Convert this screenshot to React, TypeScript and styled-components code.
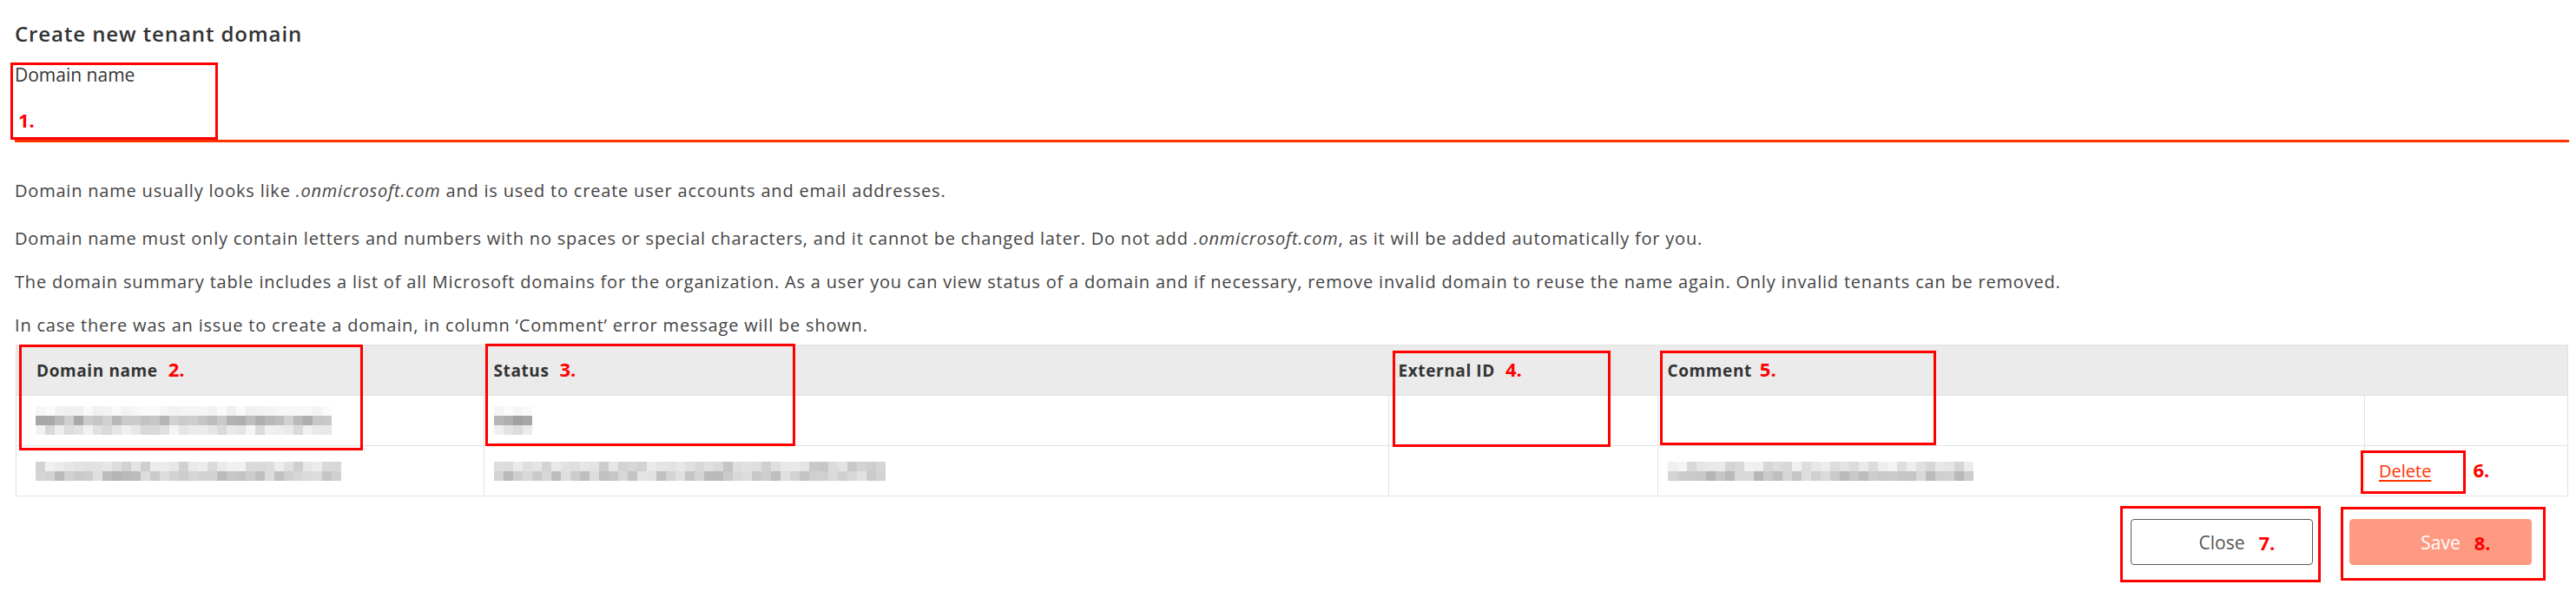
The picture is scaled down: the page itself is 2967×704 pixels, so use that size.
import React from 'react';
import styled, { createGlobalStyle } from 'styled-components';

const MARK = '#ff0000';
const ACCENT = '#ff3300';

const GlobalStyle = createGlobalStyle`
  html, body {
    margin: 0;
    padding: 0;
    background: #fff;
  }
  body {
    font-family: 'Open Sans', 'Liberation Sans', sans-serif;
    color: #444;
  }
`;

type Band = [number, number];

const seeded = (seed: number) => {
  let s = seed;
  return () => {
    s = (s * 9301 + 49297) % 233280;
    return s / 233280;
  };
};

const Redacted = ({ width, bands, seed }: { width: number; bands: Band[]; seed: number }) => {
  const next = seeded(seed);
  const cols = Math.round(width / 11);
  return (
    <Mosaic $cols={cols}>
      {bands.flatMap((band, r) =>
        Array.from({ length: cols }, (_, c) => {
          const v = Math.round(band[0] + (band[1] - band[0]) * next());
          return <Pixel key={`${r}-${c}`} style={{ background: `rgb(${v},${v},${v})` }} />;
        })
      )}
    </Mosaic>
  );
};

const boxes = [
  { n: '1.', left: 12, top: 72, width: 239, height: 89 },
  { left: 22, top: 397, width: 396, height: 122 },
  { left: 559, top: 396, width: 357, height: 118 },
  { left: 1604, top: 404, width: 251, height: 111 },
  { left: 1912, top: 404, width: 318, height: 109 },
  { left: 2719, top: 519, width: 121, height: 50 },
  { left: 2442, top: 583, width: 231, height: 88 },
  { left: 2696, top: 584, width: 236, height: 85 },
];

export default function App() {
  return (
    <Page>
      <GlobalStyle />
      <Title>Create new tenant domain</Title>

      <Field>
        <Label htmlFor="domain">Domain name</Label>
        <Input id="domain" />
      </Field>

      <Notes>
        <Note>
          Domain name usually looks like <em>.onmicrosoft.com</em> and is used to create user accounts and email
          addresses.
        </Note>
        <Note>
          Domain name must only contain letters and numbers with no spaces or special characters, and it cannot be
          changed later. Do not add <em>.onmicrosoft.com</em>, as it will be added automatically for you.
        </Note>
        <Note>
          The domain summary table includes a list of all Microsoft domains for the organization. As a user you can
          view status of a domain and if necessary, remove invalid domain to reuse the name again. Only invalid
          tenants can be removed.
        </Note>
        <Note>In case there was an issue to create a domain, in column ‘Comment’ error message will be shown.</Note>
      </Notes>

      <Table>
        <colgroup>
          <col style={{ width: 539 }} />
          <col style={{ width: 1042 }} />
          <col style={{ width: 310 }} />
          <col style={{ width: 814 }} />
          <col style={{ width: 234 }} />
        </colgroup>
        <thead>
          <tr>
            <Th $first>
              Domain name<Num>2.</Num>
            </Th>
            <Th>
              Status<Num>3.</Num>
            </Th>
            <Th>
              External ID<Num>4.</Num>
            </Th>
            <Th>
              Comment<Num $gap={9}>5.</Num>
            </Th>
            <Th />
          </tr>
        </thead>
        <tbody>
          <tr>
            <Td $first>
              <Redacted width={341} seed={11} bands={[[238, 252], [165, 215], [215, 245]]} />
            </Td>
            <Td>
              <Redacted width={45} seed={5} bands={[[240, 252], [160, 200], [218, 240]]} />
            </Td>
            <Td />
            <Td />
            <Td />
          </tr>
          <tr>
            <Td $first>
              <Redacted width={357} seed={23} bands={[[205, 242], [180, 225]]} />
            </Td>
            <Td>
              <Redacted width={450} seed={37} bands={[[195, 235], [185, 228]]} />
            </Td>
            <Td />
            <Td>
              <Redacted width={347} seed={41} bands={[[210, 246], [180, 222]]} />
            </Td>
            <Td $pad={16}>
              <DeleteLink href="#">Delete</DeleteLink>
              <Num $gap={48}>6.</Num>
            </Td>
          </tr>
        </tbody>
      </Table>

      <Actions>
        <Button>
          <ButtonText>
            Close<TrailNum>7.</TrailNum>
          </ButtonText>
        </Button>
        <Button $primary>
          <ButtonText>
            Save<TrailNum>8.</TrailNum>
          </ButtonText>
        </Button>
      </Actions>

      {boxes.map((b, i) => (
        <Mark key={i} $left={b.left} $top={b.top} $width={b.width} $height={b.height}>
          {b.n && <Num $gap={0}>{b.n}</Num>}
        </Mark>
      ))}
    </Page>
  );
}

const Page = styled.div`
  position: relative;
  width: 2967px;
  height: 704px;
  box-sizing: border-box;
  padding: 23px 8px 0 17px;
  overflow: hidden;
`;

const Title = styled.h2`
  margin: 0;
  font-size: 24px;
  line-height: 32px;
  font-weight: 600;
  letter-spacing: 0.9px;
  color: #333;
`;

const Field = styled.div`
  margin-top: 17px;
  display: flex;
  flex-direction: column;
`;

const Label = styled.label`
  font-size: 21px;
  line-height: 28px;
  font-weight: 400;
  color: #333;
`;

const Input = styled.input`
  height: 61px;
  padding: 0;
  border: 0;
  border-bottom: 3px solid ${ACCENT};
  outline: none;
  background: transparent;
  font: inherit;
`;

const Notes = styled.div`
  margin-top: 41px;
  display: flex;
  flex-direction: column;
  gap: 20px;
`;

const Note = styled.p`
  margin: 0;
  font-size: 20px;
  line-height: 30px;
  letter-spacing: 0.8px;
  color: #444;

  &:first-child {
    margin-bottom: 5px;
  }
`;

const Table = styled.table`
  width: 2939px;
  margin: 7px 0 0 1px;
  border-collapse: collapse;
  table-layout: fixed;
  border: 1px solid #e2e2e2;
`;

const Th = styled.th<{ $first?: boolean }>`
  height: 57px;
  padding: 0 11px 0 ${(p) => (p.$first ? '23px' : '11px')};
  background: #ebebeb;
  border-bottom: 1px solid #e0e0e0;
  text-align: left;
  font-size: 19px;
  font-weight: 700;
  letter-spacing: 0.6px;
  color: #333;
  white-space: nowrap;
`;

const Td = styled.td<{ $first?: boolean; $pad?: number }>`
  height: 57px;
  padding: 0 11px 0 ${(p) => (p.$first ? 22 : p.$pad ?? 11)}px;
  border: 1px solid #e3e3e3;
  vertical-align: middle;
  font-size: 20px;
`;

const Mosaic = styled.div<{ $cols: number }>`
  display: grid;
  grid-template-columns: repeat(${(p) => p.$cols}, 11px);
  grid-auto-rows: 11px;
`;

const Pixel = styled.span`
  display: block;
`;

const DeleteLink = styled.a`
  color: ${ACCENT};
  text-decoration: underline;
  text-underline-offset: 3px;
  font-size: 20px;
`;

const Num = styled.span<{ $gap?: number }>`
  margin-left: ${(p) => p.$gap ?? 12}px;
  font-size: 22px;
  line-height: 22px;
  font-weight: 700;
  letter-spacing: 0;
  color: ${MARK};
`;

const Actions = styled.div`
  margin-top: 26px;
  padding-right: 43px;
  display: flex;
  justify-content: flex-end;
  gap: 42px;
`;

const Button = styled.button<{ $primary?: boolean }>`
  width: 210px;
  height: 53px;
  box-sizing: border-box;
  border-radius: 4px;
  border: 1px solid ${(p) => (p.$primary ? '#ff9a82' : '#5a5a5a')};
  background: ${(p) => (p.$primary ? '#ff9a82' : '#fff')};
  color: ${(p) => (p.$primary ? '#fff' : '#555')};
  font-family: 'Open Sans', 'Liberation Sans', sans-serif;
  font-size: 21px;
  display: flex;
  align-items: center;
  justify-content: center;
  cursor: pointer;
`;

const ButtonText = styled.span`
  position: relative;
`;

const TrailNum = styled.span`
  position: absolute;
  left: calc(100% + 16px);
  top: 50%;
  transform: translateY(-50%);
  font-size: 22px;
  font-weight: 700;
  color: ${MARK};
`;

const Mark = styled.div<{ $left: number; $top: number; $width: number; $height: number }>`
  position: absolute;
  left: ${(p) => p.$left}px;
  top: ${(p) => p.$top}px;
  width: ${(p) => p.$width}px;
  height: ${(p) => p.$height}px;
  box-sizing: border-box;
  border: 3px solid ${MARK};
  display: flex;
  align-items: flex-end;
  padding: 0 0 9px 6px;
  pointer-events: none;
`;
